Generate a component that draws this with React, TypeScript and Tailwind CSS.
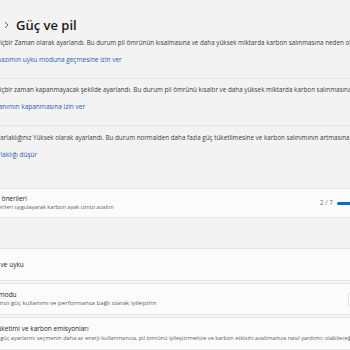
import React from "react";

function Item({
  pt,
  desc,
  link,
  descCls,
  linkCls,
  border,
}: {
  pt: string;
  desc: string;
  link: string;
  descCls: string;
  linkCls: string;
  border: boolean;
}) {
  return (
    <div className={`${pt} ${border ? "border-b border-[#e6e6e6]" : ""} flex flex-col`}>
      <div className={`h-[10px] leading-[10px] text-[6.3px] text-[#3b3b3b] whitespace-nowrap ${descCls}`}>{desc}</div>
      <div className={`mt-[7px] h-[10px] leading-[10px] text-[6.5px] text-[#1f5fae] whitespace-nowrap ${linkCls}`}>{link}</div>
    </div>
  );
}

export default function App() {
  return (
    <div className="relative w-[350px] h-[350px] overflow-hidden bg-[#f3f3f3] font-['Open_Sans','Noto_Sans',sans-serif] text-[#1b1b1b]">
      <div className="flex items-end h-[36px] pb-[4px]">
        <svg className="ml-[4px] mb-[3px] w-[5px] h-[8px]" viewBox="0 0 5 8">
          <path d="M1 1 L4 4 L1 7" fill="none" stroke="#555" strokeWidth="0.9" />
        </svg>
        <span className="ml-[7px] text-[13px] font-semibold leading-[14px] whitespace-nowrap">Güç ve pil</span>
      </div>

      <Item
        pt="pt-[2px] pb-[13px]"
        border
        descCls="ml-[-4.5px]"
        linkCls="ml-[-8.7px]"
        desc="Hiçbir Zaman olarak ayarlandı. Bu durum pil ömrünün kısalmasına ve daha yüksek miktarda karbon salınmasına neden olabilir."
        link="Cihazımın uyku moduna geçmesine izin ver"
      />
      <Item
        pt="pt-[6px] pb-[13px]"
        border
        descCls="ml-[-4px]"
        linkCls="ml-[-11px]"
        desc="hiçbir zaman kapanmayacak şekilde ayarlandı. Bu durum pil ömrünü kısaltır ve daha yüksek miktarda karbon salınmasına neden olabilir."
        link="Ekranımın kapanmasına izin ver"
      />
      <Item
        pt="pt-[7px] pb-[12px]"
        border={false}
        descCls="ml-[-3.5px]"
        linkCls="ml-[-9.5px]"
        desc="Parlaklığınız Yüksek olarak ayarlandı. Bu durum normalden daha fazla güç tüketilmesine ve karbon salınımının artmasına neden olabilir."
        link="Parlaklığı düşür"
      />

      <div className="mt-[16px] ml-[-40px] w-[440px] h-[30px] bg-[#fbfbfb] border border-[#e5e5e5] rounded-[4px] flex items-center">
        <div className="flex flex-col ml-[21.6px]">
          <div className="h-[8px] leading-[8px] text-[6.5px] whitespace-nowrap">Enerji önerileri</div>
          <div className="h-[8px] leading-[8px] text-[5.6px] text-[#5f5f5f] whitespace-nowrap">Bu önerileri uygulayarak karbon ayak izinizi azaltın</div>
        </div>
        <div className="ml-auto flex items-center mr-[-2px] w-[81px]">
          <span className="text-[6.3px] leading-[8px] text-[#6b6b6b] whitespace-nowrap">2 / 7</span>
          <div className="ml-[4px] h-[3px] w-[60px] rounded-full bg-[#0f6cbd]" />
        </div>
      </div>

      <div className="mt-[30px] ml-[-40px] w-[440px] h-[33px] bg-[#fbfbfb] border border-[#e5e5e5] rounded-[4px] flex items-center">
        <div className="ml-[20.6px] h-[9px] leading-[9px] text-[6.5px] whitespace-nowrap">Ekran ve uyku</div>
      </div>

      <div className="mt-[2px] ml-[-40px] w-[440px] h-[32px] bg-[#fbfbfb] border border-[#e5e5e5] rounded-[4px] flex items-center">
        <div className="flex flex-col ml-[24.2px]">
          <div className="h-[8px] leading-[8px] text-[6.5px] whitespace-nowrap">Güç modu</div>
          <div className="ml-[-2.3px] h-[8px] leading-[8px] text-[6.1px] text-[#5f5f5f] whitespace-nowrap">Cihazınızı güç kullanımı ve performansa bağlı olarak iyileştirin</div>
        </div>
      </div>
      <div className="absolute left-[348px] top-[292px] w-[40px] h-[15px] rounded-[3px] border border-[#e0e0e0] bg-[#fdfdfd]" />

      <div className="mt-[2px] ml-[-40px] w-[440px] h-[33px] bg-[#fbfbfb] border border-[#e5e5e5] rounded-[4px] flex items-center">
        <div className="flex flex-col ml-[20.5px]">
          <div className="h-[8px] leading-[8px] text-[6.5px] whitespace-nowrap">Güç tüketimi ve karbon emisyonları</div>
          <div className="mt-[1px] ml-[2.6px] h-[8px] leading-[8px] text-[5.6px] text-[#5f5f5f] whitespace-nowrap">Belirli güç ayarlarını seçmenin daha az enerji kullanmanıza, pil ömrünü iyileştirmenize ve karbon etkisini azaltmanıza nasıl yardımcı olabileceğini öğrenin</div>
        </div>
      </div>
    </div>
  );
}
